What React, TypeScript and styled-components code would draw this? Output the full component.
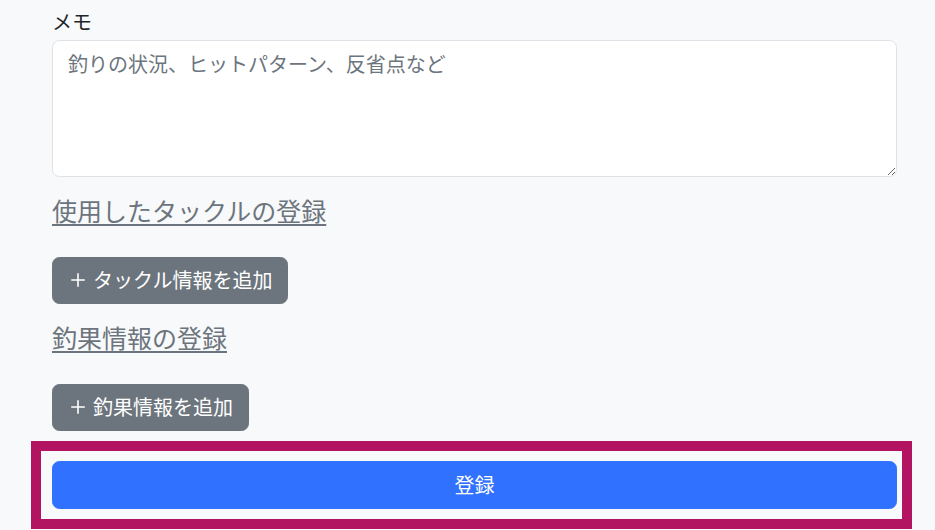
import React from 'react';
import styled, { createGlobalStyle } from 'styled-components';

const GlobalStyle = createGlobalStyle`
  html, body {
    margin: 0;
    padding: 0;
    background: #f8f9fa;
  }
  body {
    font-family: "Noto Sans CJK JP", "Noto Sans", sans-serif;
    color: #212529;
    font-size: 20px;
    line-height: 1.5;
  }
`;

const Page = styled.div`
  width: 935px;
  height: 530px;
  overflow: hidden;
  background: #f8f9fa;
  box-sizing: border-box;
  padding: 0 23px 0 31px;
`;

const Form = styled.div`
  display: flex;
  flex-direction: column;
  padding: 0 15px 0 21px;
`;

const Label = styled.label`
  display: block;
  font-size: 20px;
  line-height: 30px;
  margin: 7px 0 3px;
`;

const Memo = styled.textarea`
  box-sizing: border-box;
  width: 100%;
  height: 137px;
  margin: 0;
  padding: 7.5px 15px;
  font-family: inherit;
  font-size: 20px;
  line-height: 30px;
  color: #212529;
  background: #fff;
  border: 1px solid #dee2e6;
  border-radius: 7.5px;
  resize: vertical;
  outline: none;

  &::placeholder {
    color: #6c757d;
  }
`;

const SectionLink = styled.a`
  align-self: flex-start;
  font-size: 25px;
  line-height: 30px;
  font-weight: 400;
  color: #6c757d;
  text-decoration: underline;
  text-underline-offset: 3px;
  margin-top: 18px;
  cursor: pointer;
`;

const AddButton = styled.button`
  align-self: flex-start;
  box-sizing: border-box;
  height: 47.5px;
  margin-top: 31.5px;
  padding: 0 15px;
  display: inline-flex;
  align-items: center;
  gap: 5px;
  font-family: inherit;
  font-size: 20px;
  line-height: 30px;
  color: #fff;
  background: #6c757d;
  border: 1px solid #6c757d;
  border-radius: 7.5px;
  cursor: pointer;
`;

const Highlight = styled.div`
  margin-top: 10px;
  border: 10px solid #b31462;
  padding: 10px 5px 10px 11px;
`;

const SubmitButton = styled.button`
  display: block;
  box-sizing: border-box;
  width: 100%;
  height: 47.5px;
  font-family: inherit;
  font-size: 20px;
  line-height: 30px;
  color: #fff;
  background: #3072ff;
  border: 1px solid #3072ff;
  border-radius: 7.5px;
  cursor: pointer;
`;

function PlusIcon() {
  return (
    <svg width="20" height="20" viewBox="0 0 20 20" aria-hidden="true">
      <path d="M10 3.2v13.6M3.2 10h13.6" stroke="currentColor" strokeWidth="1.6" fill="none" />
    </svg>
  );
}

export default function App() {
  return (
    <Page>
      <GlobalStyle />
      <Form>
        <Label>メモ</Label>
        <Memo placeholder="釣りの状況、ヒットパターン、反省点など" />
        <SectionLink>使用したタックルの登録</SectionLink>
        <AddButton>
          <PlusIcon />
          タックル情報を追加
        </AddButton>
        <SectionLink>釣果情報の登録</SectionLink>
        <AddButton>
          <PlusIcon />
          釣果情報を追加
        </AddButton>
      </Form>
      <Highlight>
        <SubmitButton>登録</SubmitButton>
      </Highlight>
    </Page>
  );
}
